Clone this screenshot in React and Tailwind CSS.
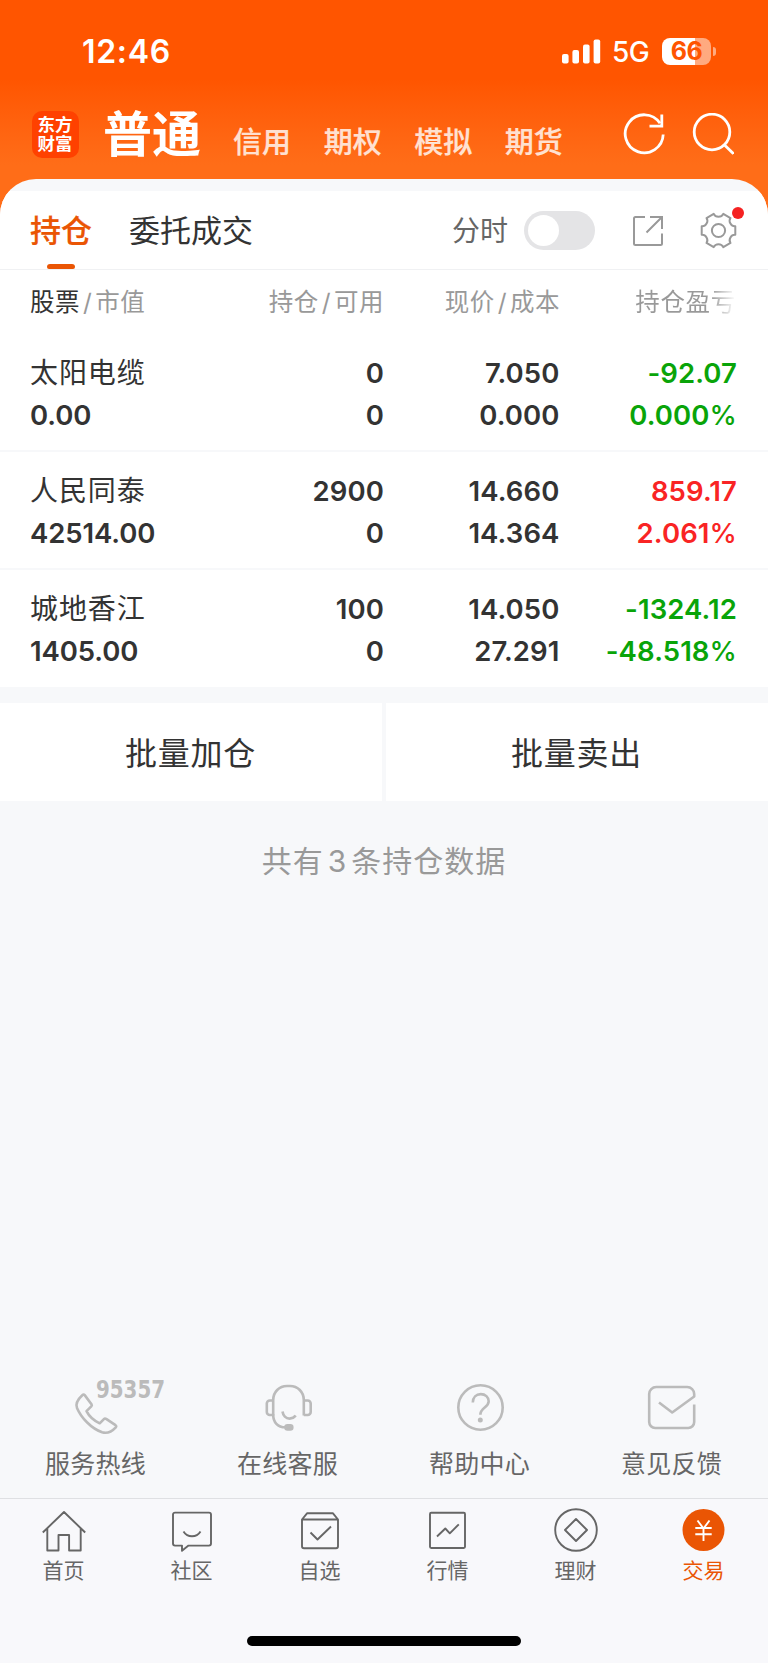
import { useState } from 'react';
import clsx from 'clsx';

const markets = ['信用', '期权', '模拟', '期货'];

const holdings = [
  { name: '太阳电缆', value: '0.00', amount: '0', usable: '0', price: '7.050', cost: '0.000', profit: '-92.07', rate: '0.000', up: false },
  { name: '人民同泰', value: '42514.00', amount: '2900', usable: '0', price: '14.660', cost: '14.364', profit: '859.17', rate: '2.061', up: true },
  { name: '城地香江', value: '1405.00', amount: '100', usable: '0', price: '14.050', cost: '27.291', profit: '-1324.12', rate: '-48.518', up: false },
];

const StatusBar = () => (
  <div className="flex h-[102px] items-center pl-[82px] pr-[52px]">
    <span className="pt-[2px] text-[32px] leading-none font-semibold tracking-[0.7px]">12:46</span>
    <div className="ml-auto flex items-center">
      <svg width="39" height="25" viewBox="0 0 39 25" fill="currentColor">
        <rect x="0" y="15" width="6.6" height="9.5" rx="2" />
        <rect x="10.4" y="11" width="6.6" height="13.5" rx="2" />
        <rect x="21" y="5.5" width="6.6" height="19" rx="2" />
        <rect x="31.6" y="0.5" width="6.6" height="24" rx="2" />
      </svg>
      <span className="ml-[11px] w-[38px] pt-[2px] text-[28px] leading-none font-medium tracking-[-0.5px]">5G</span>
      <div className="ml-[12px] flex h-[27px] w-[49px] items-center justify-center rounded-[8px] bg-linear-to-r from-white from-[67%] to-white/50 to-[67%] text-[25px] leading-none font-bold tracking-[-0.5px] text-[#ff5500]">
        66
      </div>
      <div className="ml-[2px] h-[9px] w-[3px] rounded-r-full bg-white/50" />
    </div>
  </div>
);

const Header = () => (
  <header className="h-[220px] bg-linear-to-b from-[#ff5500] from-[36%] to-[#ff6d18] to-[75%] text-white">
    <StatusBar />
    <div className="flex h-[64px] items-center pl-[31.5px] pr-[34px]">
      <div className="flex size-[47px] items-center justify-center rounded-[10px] bg-[#ff4100] text-center text-[17.5px] leading-[19px] font-bold">
        <p>
          东方
          <br />
          财富
        </p>
      </div>
      <h1 className="ml-[24.5px] pt-px text-[49px] leading-[64px] font-bold">普通</h1>
      <nav className="ml-[32px] flex gap-[32.6px] pt-[17px] text-[29px] leading-[40px] font-medium text-white/80 [-webkit-text-stroke:0.2px]">
        {markets.map((m) => (
          <span key={m}>{m}</span>
        ))}
      </nav>
      <svg className="ml-auto" width="42" height="42" viewBox="0 0 42 42" fill="none" stroke="currentColor" strokeWidth="2.8">
        <path d="M40.2 21.500a19 19 0 1 1-3.200-11.300" />
        <path d="M38.800 1.600v11.600H26.500" />
      </svg>
      <svg className="ml-[27px]" width="42" height="42" viewBox="0 0 42 42" fill="none" stroke="currentColor" strokeWidth="2.8">
        <circle cx="20" cy="19" r="17.800" />
        <path d="M32 31.400 41.500 40.800" />
      </svg>
    </div>
  </header>
);

const Tabs = () => {
  const [on, setOn] = useState(false);

  return (
    <div className="flex h-[79px] border-b border-[#f0f1f3] bg-white pl-[30px] pr-[31px]">
      <div className="flex w-[62px] flex-col items-center">
        <span className="mt-[19px] text-[31px] leading-[42px] font-medium text-[#ea5504] [-webkit-text-stroke:0.2px]">持仓</span>
        <span className="mt-auto h-[5px] w-7 rounded-t-[3px] rounded-b-[2px] bg-[#ea5504]" />
      </div>
      <span className="mt-[19px] ml-[37px] text-[31px] leading-[42px] text-[#333]">委托成交</span>
      <div className="ml-auto flex h-[79px] items-center">
        <span className="text-[28px] leading-[40px] text-[#666]">分时</span>
        <button
          onClick={() => setOn(!on)}
          className={clsx('ml-[16px] flex h-[39px] w-[71px] items-center rounded-full px-1', on ? 'justify-end bg-[#ea5504]' : 'bg-[#e4e4e6]')}
        >
          <span className="size-[31px] rounded-full bg-white" />
        </button>
        <svg className="ml-[37px]" width="32" height="32" viewBox="0 0 32 32" fill="none" stroke="#999" strokeWidth="2">
          <path d="M13 2H3.500A1.500 1.500 0 0 0 2 3.500v25A1.500 1.500 0 0 0 3.500 30h25a1.500 1.500 0 0 0 1.500-1.500V18.500" />
          <path d="M18 2h12v12M30 2 14.500 17.500" />
        </svg>
        <div className="relative ml-[36px]">
          <svg width="37" height="37" viewBox="0 0 37 37" fill="none" stroke="#999" strokeWidth="2" strokeLinejoin="round">
            <path d="M35.300 14.300V22.700C31.100 22.300 28.100 27.500 30.500 30.950L23.300 35.200C21.500 31.300 15.500 31.300 13.700 35.200L6.500 30.950C8.900 27.500 5.900 22.300 1.700 22.700V14.300C5.900 14.700 8.900 9.500 6.500 6.050L13.700 1.800C15.500 5.700 21.500 5.700 23.300 1.800L30.500 6.050C28.100 9.500 31.100 14.700 35.300 14.300z" />
            <circle cx="18.500" cy="18.500" r="6.600" />
          </svg>
          <span className="absolute -top-[5px] -right-[7px] size-3 rounded-full bg-[#f52222]" />
        </div>
      </div>
    </div>
  );
};

const Slash = () => <span className="mx-[3px]">/</span>;

const TableHead = () => (
  <div className="flex h-16 items-center px-[30px] text-[24.5px] leading-[36px] tracking-[0.5px] text-[#999]">
    <div className="w-[160px]">
      <span className="text-[#333]">股票</span>
      <Slash />
      市值
    </div>
    <div className="w-[194px] text-right">持仓<Slash />可用</div>
    <div className="w-[176px] text-right">现价<Slash />成本</div>
    <div className="mr-[2px] ml-auto bg-linear-to-r from-[#999] from-[75%] to-[#999]/0 bg-clip-text tracking-[0.7px] text-transparent">持仓盈亏</div>
  </div>
);

const HoldingRow = ({ item, last }) => (
  <div
    className={clsx(
      'flex px-[30px] pt-[18px] text-[27.5px] leading-[42px] font-semibold tracking-[0.1px] text-[#333]',
      last ? 'h-[117px]' : 'h-[118px] border-b-2 border-[#f7f8fa]',
    )}
  >
    <div className="w-[160px]">
      <div className="text-[28px] font-normal tracking-[0.9px]">{item.name}</div>
      <div className="tracking-[-0.1px]">{item.value}</div>
    </div>
    <div className="w-[194px] text-right">
      <div>{item.amount}</div>
      <div>{item.usable}</div>
    </div>
    <div className="w-[175.5px] text-right">
      <div>{item.price}</div>
      <div>{item.cost}</div>
    </div>
    <div className={clsx('flex-1 pr-px text-right', item.up ? 'text-[#f92424]' : 'text-[#09a409]')}>
      <div>{item.profit}</div>
      <div>
        {item.rate}
        <span className="font-medium">%</span>
      </div>
    </div>
  </div>
);

const services = [
  {
    label: '服务热线',
    icon: (
      <svg width="100" height="60" viewBox="0 0 100 60" fill="none" stroke="#bbb" strokeWidth="2.6" strokeLinejoin="round">
        <path d="M36.500 17c.8-.8 1.500-.7 2.200.1l6.800 9.100c.5.8.4 1.500-.2 2.100l-4.800 4.800c2.600 5.200 7.500 9.500 13.200 12.200l4.200-4.200c.7-.7 1.500-.7 2.300-.2l9.300 6.300c.9.700 1 1.400.3 2.200-4 4.300-8.500 6.500-13.700 4.900C45.100 50.500 35 39.500 31 30c-2-5 1.400-9.200 5.500-13z" />
        <text x="50" y="20" fill="#bbb" stroke="none" fontSize="25" fontWeight="700" textLength="69" lengthAdjust="spacingAndGlyphs" fontFamily="DejaVu Sans Condensed, DejaVu Sans, sans-serif">95357</text>
      </svg>
    ),
  },
  {
    label: '在线客服',
    icon: (
      <svg width="100" height="60" viewBox="0 0 100 60" fill="none" stroke="#bbb" strokeWidth="2.6" strokeLinejoin="round">
        <path d="M35.200 37.500V22c0-8 6-14 13.800-14h3c7.800 0 13.800 6 13.800 14v15.500" />
        <path d="M35.200 22.500h-3.400a3 3 0 0 0-3 3v8.500a3 3 0 0 0 3 3h3.400c0 7 4.300 12.300 12.300 12.300M65.800 22.500h3.900a3 3 0 0 1 3 3v8.500a3 3 0 0 1-3 3h-3.900" />
        <path d="M44.500 33.500c.5 4 3.500 7.100 7 7.100 2.600 0 4.800-1.100 6.200-3" />
        <rect x="47.500" y="47.300" width="6.800" height="4.200" rx="2" fill="#bbb" />
      </svg>
    ),
  },
  {
    label: '帮助中心',
    icon: (
      <svg width="100" height="60" viewBox="0 0 100 60" fill="none" stroke="#bbb" strokeWidth="2.6">
        <circle cx="50.500" cy="29.500" r="22.200" />
        <path d="M42.800 24.500c0-5.300 3.500-8.400 8-8.400s7.900 3 7.900 7.200c0 6.200-8.300 6.500-8.300 13.400" />
        <circle cx="50.300" cy="42" r="2.500" fill="#bbb" stroke="none" />
      </svg>
    ),
  },
  {
    label: '意见反馈',
    icon: (
      <svg width="100" height="60" viewBox="0 0 100 60" fill="none" stroke="#bbb" strokeWidth="2.600" strokeLinejoin="round">
        <path d="M37 24.500 50.200 34.500 72.200 18.500V16a7 7 0 0 0-7-7h-31a7 7 0 0 0-7 7v28a6 6 0 0 0 6 6h33a6 6 0 0 0 6-6V26.500" />
      </svg>
    ),
  },
];

const navItems = [
  {
    label: '首页',
    icon: <path d="M.8 24.500 22 4l21.200 20.500M5.300 20.500v22H16.500V27h10.600v15.500H38.700v-22" />,
  },
  {
    label: '社区',
    icon: (
      <>
        <path d="M5 4.600h34a2 2 0 0 1 2 2v29a2 2 0 0 1-2 2H18.500L12 42.800v-5.200H5a2 2 0 0 1-2-2v-29a2 2 0 0 1 2-2z" />
        <path d="M13.500 23.500c4 6.400 13 6.400 17 0" />
      </>
    ),
  },
  {
    label: '自选',
    icon: (
      <>
        <path d="M4 11.500h36v26.700a2 2 0 0 1-2 2H6a2 2 0 0 1-2-2zl5-6.200h26l5 6.200" />
        <path d="M12.500 24.500l7 7L33 18.500" />
      </>
    ),
  },
  {
    label: '行情',
    icon: (
      <>
        <rect x="4" y="4.700" width="35" height="35.300" rx="1.200" />
        <path d="M11 28.500l8.300-8 4.500 4.800 9-9" />
      </>
    ),
  },
  {
    label: '理财',
    icon: (
      <>
        <circle cx="22" cy="22" r="20.800" />
        <path d="M22 11 33 22 22 33 11 22z" />
      </>
    ),
  },
  {
    label: '交易',
    active: true,
    icon: (
      <>
        <circle cx="21.500" cy="22" r="21" fill="#ea5504" stroke="none" />
        <path d="M15.500 12.500l6 8 6-8M21.500 20.500v12.500M13.300 20h16.400M13.300 26.200h16.400" stroke="#fff" />
      </>
    ),
  },
];

const App = () => {
  return (
    <div className="flex h-[1663px] w-[768px] flex-col overflow-hidden bg-[#f7f8fa] font-['Inter','Noto_Sans_CJK_SC',sans-serif]">
      <Header />

      {/* Holdings */}
      <main className="-mt-[41px] flex-1">
        <div className="overflow-hidden rounded-t-[36px] bg-[#f7f8fa] pt-3">
          <Tabs />
          <div className="bg-white">
            <TableHead />
            {holdings.map((item, i) => (
              <HoldingRow key={item.name} item={item} last={i === holdings.length - 1} />
            ))}
          </div>
        </div>

        <div className="mt-4 flex h-[98px] gap-1 text-[32px] tracking-[0.7px] text-[#333]">
          <button className="flex-1 bg-white pt-1 pr-px">批量加仓</button>
          <button className="flex-1 bg-white pt-1 pr-px">批量卖出</button>
        </div>

        <p className="mt-[39px] text-center text-[30px] leading-[42px] tracking-[1px] text-[#999]">
          共有<span className="mx-[4px]">3</span>条持仓数据
        </p>
      </main>

      {/* Service links */}
      <div className="grid h-[120px] grid-cols-4">
        {services.map(({ label, icon }) => (
          <div key={label} className="flex flex-col items-center pr-px [&_svg]:overflow-visible">
            {icon}
            <span className="mt-[8px] text-[25px] leading-[36px] tracking-[0.3px] text-[#666]">{label}</span>
          </div>
        ))}
      </div>

      {/* Bottom bar */}
      <div className="h-[165px] border-t border-[#dfe0e3] bg-[#f8f8fb]">
        <div className="grid grid-cols-6 pt-[9px]">
          {navItems.map(({ label, icon, active }) => (
            <div key={label} className={clsx('flex flex-col items-center', active ? 'text-[#ea5504]' : 'text-[#666]')}>
              <svg width="44" height="44" viewBox="0 0 44 44" fill="none" stroke="currentColor" strokeWidth="1.900" strokeLinejoin="round">
                {icon}
              </svg>
              <span className="mt-[4px] pr-px text-[21px] leading-[30px]">{label}</span>
            </div>
          ))}
        </div>
        <div className="mx-auto mt-[50px] h-[10px] w-[274px] rounded-full bg-black" />
      </div>
    </div>
  );
};

export default App;
